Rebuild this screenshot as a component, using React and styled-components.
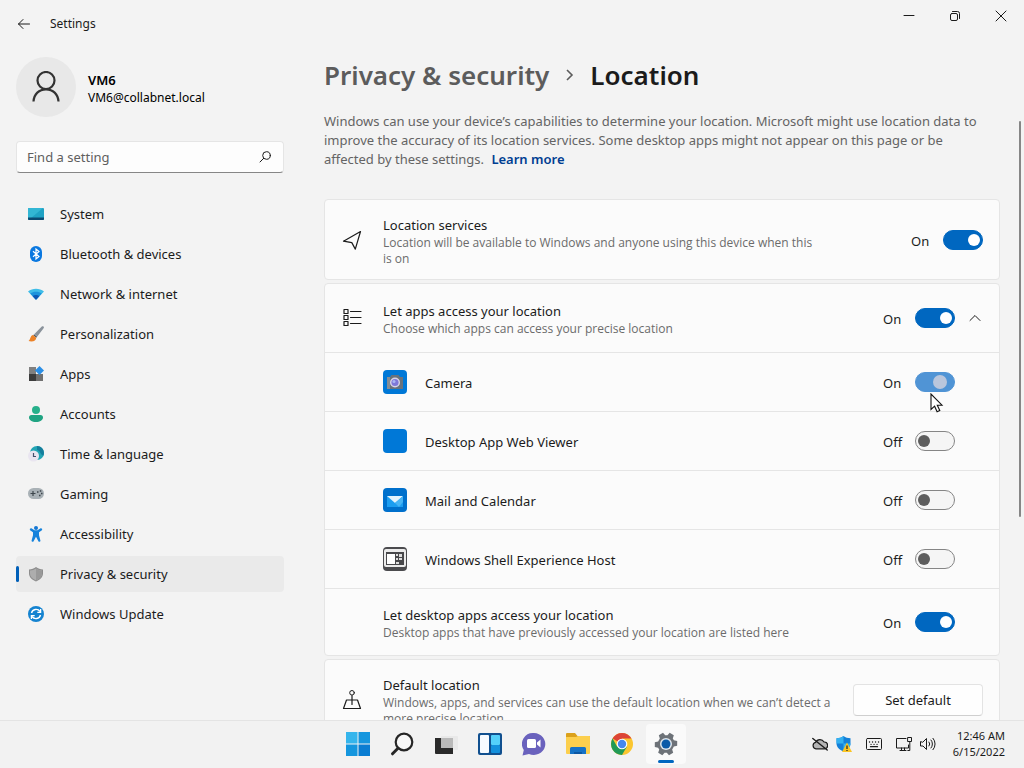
import { useState } from "react";
import styled, { createGlobalStyle } from "styled-components";

const GlobalStyle = createGlobalStyle`
  * {
    box-sizing: border-box;
  }
  body {
    margin: 0;
    background: #f3f3f3;
    color: #1b1b1b;
    font-family: "Noto Sans", "Open Sans", sans-serif;
    font-size: 13px;
    line-height: 20px;
  }
  button,
  input {
    font: inherit;
    color: inherit;
  }
  svg {
    display: block;
    flex: none;
  }
`;

const Desktop = styled.div`
  display: flex;
  flex-direction: column;
  height: 100vh;
  overflow: hidden;
`;

const Window = styled.div`
  flex: 1;
  min-height: 0;
  display: flex;
  flex-direction: column;
`;

const TitleBar = styled.header`
  display: flex;
  align-items: flex-start;
  justify-content: space-between;
  height: 48px;
  flex: none;
`;

const TitleLeft = styled.div`
  display: flex;
  align-items: center;
  gap: 10px;
  height: 48px;
  padding-left: 8px;
  font-size: 12px;
`;

const PlainButton = styled.button`
  display: flex;
  align-items: center;
  justify-content: center;
  width: ${(p) => p.$width || 32}px;
  height: 32px;
  padding: 0;
  border: 0;
  background: transparent;
`;

const WindowControls = styled.div`
  display: flex;
`;

const Body = styled.div`
  flex: 1;
  min-height: 0;
  display: flex;
`;

const Sidebar = styled.aside`
  width: 300px;
  flex: none;
  padding: 9px 16px 0;
`;

const Profile = styled.div`
  display: flex;
  align-items: center;
  gap: 12px;
  height: 60px;
`;

const Avatar = styled.div`
  display: flex;
  align-items: center;
  justify-content: center;
  width: 60px;
  height: 60px;
  border-radius: 50%;
  background: #e8e8e8;
`;

const ProfileName = styled.div`
  margin-top: 4px;
  font-weight: 600;
  line-height: 18px;
  color: #000;
`;

const ProfileMail = styled.div`
  font-size: 12px;
  line-height: 18px;
  color: #000;
`;

const SearchBox = styled.label`
  display: flex;
  align-items: center;
  width: 268px;
  height: 32px;
  margin: 24px 0 23px;
  padding: 0 12px 0 10px;
  border: 1px solid #e5e5e5;
  border-bottom-color: #868686;
  border-radius: 4px;
  background: #fdfdfd;
`;

const SearchInput = styled.input`
  flex: 1;
  min-width: 0;
  padding: 0;
  border: 0;
  outline: 0;
  background: transparent;
  &::placeholder {
    color: #5f5f5f;
    opacity: 1;
  }
`;

const Nav = styled.nav`
  display: flex;
  flex-direction: column;
  gap: 4px;
  width: 268px;
`;

const NavLink = styled.a`
  display: flex;
  align-items: center;
  gap: 16px;
  height: 36px;
  border-radius: 4px;
  color: inherit;
  text-decoration: none;
  background: ${(p) => (p.$active ? "#eaeaea" : "transparent")};
  &::before {
    content: "";
    width: 3px;
    height: 16px;
    margin-right: -7px;
    border-radius: 2px;
    background: ${(p) => (p.$active ? "#005fb8" : "transparent")};
  }
`;

const Content = styled.main`
  flex: 1;
  min-width: 0;
  overflow: hidden;
  padding: 8px 0 0 24px;
`;

const Breadcrumb = styled.h1`
  display: flex;
  align-items: center;
  gap: 16px;
  margin: 0;
  font-size: 26px;
  font-weight: 600;
  line-height: 38px;
`;

const Crumb = styled.a`
  color: #5c5c5c;
  text-decoration: none;
`;

const Intro = styled.p`
  margin: 18px 0 30px;
  padding-right: 8px;
  line-height: 19px;
  color: #646464;
`;

const LearnMore = styled.a`
  margin-left: 4px;
  font-weight: 600;
  color: #003e92;
  text-decoration: none;
`;

const Cards = styled.div`
  display: flex;
  flex-direction: column;
  gap: 3px;
`;

const Card = styled.section`
  border: 1px solid #e5e5e5;
  border-radius: 4px;
  background: #fbfbfb;
`;

const Row = styled.div`
  display: flex;
  align-items: center;
  min-height: ${(p) => p.$height || 79}px;
  padding: 0 ${(p) => (p.$inset ? 44 : 16)}px 0 ${(p) => (p.$nested ? 58 : 17)}px;
  & + & {
    border-top: 1px solid #e5e5e5;
  }
`;

const RowIcon = styled.div`
  width: ${(p) => (p.$app ? 24 : 20)}px;
  margin-right: ${(p) => (p.$app ? 18 : 21)}px;
  flex: none;
`;

const RowText = styled.div`
  flex: 1;
  min-width: 0;
  padding-top: 2px;
`;

const RowTitle = styled.div`
  line-height: 20px;
`;

const RowHint = styled.div`
  font-family: "Open Sans", "Noto Sans", sans-serif;
  font-size: 12px;
  line-height: 16px;
  color: #6b6b6b;
`;

const ToggleLabel = styled.label`
  position: relative;
  display: flex;
  align-items: center;
  justify-content: flex-end;
  min-width: ${(p) => (p.$wide ? 166 : 72)}px;
`;

const ToggleText = styled.span`
  width: 32px;
  padding-top: 2px;
`;

const ToggleInput = styled.input`
  appearance: none;
  display: flex;
  align-items: center;
  width: 40px;
  height: 20px;
  margin: 0;
  padding: 0 2px;
  border: 1px solid #858585;
  border-radius: 10px;
  background: #f5f5f5;
  &::before {
    content: "";
    width: 12px;
    height: 12px;
    border-radius: 50%;
    background: #5d5d5d;
  }
  &:checked {
    justify-content: flex-end;
    padding-right: ${(p) => (p.$pressed ? 7 : 2)}px;
    border-color: ${(p) => (p.$pressed ? "#5094d5" : "#0067c0")};
    background: ${(p) => (p.$pressed ? "#5094d5" : "#0067c0")};
  }
  &:checked::before {
    width: ${(p) => (p.$pressed ? 14 : 12)}px;
    height: ${(p) => (p.$pressed ? 14 : 12)}px;
    background: ${(p) => (p.$pressed ? "#b9c6dc" : "#fff")};
  }
`;

const Expander = styled(PlainButton)`
  margin: 0 -34px 0 6px;
`;

const Pointer = styled.svg`
  position: absolute;
  left: 47px;
  top: 22px;
`;

const DefaultButton = styled.button`
  width: 130px;
  height: 32px;
  margin-left: 16px;
  border: 1px solid #e3e3e3;
  border-bottom-color: #cfcfcf;
  border-radius: 4px;
  background: #fefefe;
`;

const ScrollTrack = styled.div`
  width: 24px;
  flex: none;
  display: flex;
  justify-content: flex-end;
  padding: 73px 3px 0 0;
`;

const ScrollThumb = styled.div`
  width: 2px;
  height: 396px;
  border-radius: 1px;
  background: #868686;
`;

const Taskbar = styled.footer`
  display: grid;
  grid-template-columns: 1fr auto 1fr;
  align-items: center;
  flex: none;
  height: 48px;
  padding-bottom: 1px;
  border-top: 1px solid #e4e4e4;
  background: #f2f2f2;
`;

const TaskList = styled.div`
  grid-column: 2;
  display: flex;
  gap: 4px;
`;

const TaskButton = styled.button`
  position: relative;
  display: flex;
  align-items: center;
  justify-content: center;
  width: 40px;
  height: 40px;
  padding: 0;
  border: 0;
  border-radius: 4px;
  background: ${(p) => (p.$active ? "#fafafa" : "transparent")};
  &::after {
    content: "";
    position: absolute;
    bottom: 1px;
    width: 16px;
    height: 3px;
    border-radius: 2px;
    background: ${(p) => (p.$active ? "#0067c0" : "transparent")};
  }
`;

const Tray = styled.div`
  display: flex;
  align-items: center;
  justify-content: flex-end;
  gap: 14px;
  padding-right: 19px;
`;

const TrayGroup = styled.div`
  display: flex;
  gap: 8px;
`;

const Clock = styled.div`
  min-width: 55px;
  font-size: 11px;
  line-height: 16px;
  text-align: right;
`;

const navItems = [
  {
    name: "System",
    icon: (
      <>
        <rect x="0" y="2" width="16" height="12" rx="1" fill="#1fa2c4" />
        <path d="M0 3a1 1 0 0 1 1-1h14L3 12H0z" fill="#32b6d4" />
        <path d="M0 11.500h16V13a1 1 0 0 1-1 1H1a1 1 0 0 1-1-1z" fill="#0b4a72" />
      </>
    ),
  },
  {
    name: "Bluetooth & devices",
    icon: (
      <>
        <rect x="2" y="0" width="12" height="16" rx="6" fill="#0a78e0" />
        <path d="M5 5.300l6 5.200L8 13V3l3 2.500-6 5.200" fill="none" stroke="#fff" strokeWidth="1.200" />
      </>
    ),
  },
  {
    name: "Network & internet",
    icon: (
      <>
        <path d="M0 5.500C4.500 1.800 11.500 1.800 16 5.500L8.600 13.200a.8.8 0 0 1-1.200 0z" fill="#3fbde8" />
        <path d="M2.200 7.600c3.500-2.600 8.100-2.600 11.600 0L8.600 13.200a.8.8 0 0 1-1.200 0z" fill="#1b93dc" />
        <path d="M4.600 10.100c2-1.500 4.800-1.500 6.800 0l-2.800 3.100a.8.8 0 0 1-1.200 0z" fill="#0c57b4" />
      </>
    ),
  },
  {
    name: "Personalization",
    icon: (
      <>
        <path d="M15.500.4c.7.6.5 1.300.1 1.900L9.300 10.600 6.400 8 13.800.6c.5-.5 1.200-.6 1.700-.2z" fill="#8a929b" />
        <path d="M6.200 8.200l2.900 2.500-.9 1.100-3-2.600z" fill="#4d5661" />
        <path d="M5.100 9.100l3.100 2.700c.1 2.500-2.900 4.600-7.700 3.300 1.900-.8 1.500-5.500 4.600-6z" fill="#ec8227" />
      </>
    ),
  },
  {
    name: "Apps",
    icon: (
      <>
        <rect x="1" y="1" width="7" height="7" fill="#808080" />
        <rect x="1" y="8" width="7" height="7" fill="#3c3c3c" />
        <rect x="8" y="8" width="7" height="7" fill="#707070" />
        <path d="M11.500 0L16 4.500 11.500 9 7 4.500z" fill="#2b8fe6" />
      </>
    ),
  },
  {
    name: "Accounts",
    icon: (
      <>
        <circle cx="8" cy="4" r="4" fill="#27b08b" />
        <path d="M3.500 9h9A2.500 2.500 0 0 1 15 11.500C15 14 12 16 8 16s-7-2-7-4.500A2.500 2.500 0 0 1 3.500 9z" fill="#1fa382" />
      </>
    ),
  },
  {
    name: "Time & language",
    icon: (
      <>
        <circle cx="9" cy="7" r="7" fill="#22a5b4" />
        <path d="M9 0a7 7 0 0 1 6.500 9.500C12 9 13 5 9 4z" fill="#147e9c" />
        <circle cx="5.500" cy="10" r="5.500" fill="#e9e5f0" />
        <path d="M5.500 7v3.500H8" fill="none" stroke="#44506b" strokeWidth="1.200" />
      </>
    ),
  },
  {
    name: "Gaming",
    icon: (
      <>
        <rect x="0" y="2" width="16" height="11" rx="5.500" fill="#a9b1b6" />
        <path d="M5 5v5M2.500 7.500h5" stroke="#3e464c" strokeWidth="1.200" />
        <path d="M9 6h1.500M11 9.500h1.500M11.800 5h1.500M13 7.500h1.500" stroke="#3e464c" strokeWidth="1.500" />
      </>
    ),
  },
  {
    name: "Accessibility",
    icon: (
      <>
        <circle cx="8" cy="2" r="2" fill="#1477d4" />
        <path
          d="M2 2.800c.5-.8 1.200-.7 1.800-.3L6.500 4.300h3l2.700-1.800c.6-.4 1.300-.5 1.800.3.400.7.100 1.200-.4 1.600L11 6.300v3l1.400 5.200c.3 1.200-1.500 1.900-2 .7L8 10.800l-2.400 4.400c-.5 1.200-2.300.5-2-.7L5 9.300v-3L2.400 4.400c-.5-.4-.8-.9-.4-1.600z"
          fill="#1683dc"
        />
      </>
    ),
  },
  {
    name: "Privacy & security",
    icon: (
      <>
        <path d="M8 1c2 1.600 4.200 2.300 7 2.400v4.100c0 3.800-3 6.300-7 8-4-1.700-7-4.200-7-8V3.400C3.800 3.300 6 2.600 8 1z" fill="#8c8c8c" />
        <path d="M8 2.400c1.700 1.200 3.600 1.900 6 2v3.100c0 3.100-2.400 5.300-6 6.900-3.600-1.600-6-3.800-6-6.900V4.400c2.400-.1 4.300-.8 6-2z" fill="#adadad" />
        <path d="M8 2.400c1.700 1.200 3.600 1.900 6 2v3.100c0 3.100-2.400 5.300-6 6.900z" fill="#999" />
      </>
    ),
  },
  {
    name: "Windows Update",
    icon: (
      <>
        <circle cx="8" cy="8" r="8" fill="#1583d0" />
        <path d="M3.500 7A4.700 4.700 0 0 1 12 5.500M12.500 9A4.700 4.700 0 0 1 4 10.500" fill="none" stroke="#fff" strokeWidth="1.400" />
        <path d="M12.600 3v3.300H9.300M3.400 13V9.700h3.300" fill="none" stroke="#fff" strokeWidth="1.300" />
      </>
    ),
  },
];

const apps = [
  {
    name: "Camera",
    on: true,
    pressed: true,
    icon: (
      <>
        <rect width="24" height="24" rx="4" fill="#0078d7" />
        <path d="M4 7h3l1.500-2h7L17 7h3v12H4z" fill="#69727c" />
        <path d="M4 7h3v12H4z" fill="#858d95" />
        <circle cx="12" cy="12.500" r="5" fill="#d9d5e6" />
        <circle cx="12" cy="12.500" r="3.600" fill="#7f78d8" />
        <circle cx="11" cy="11.500" r="1.500" fill="#a9b6f4" />
      </>
    ),
  },
  {
    name: "Desktop App Web Viewer",
    icon: <rect width="24" height="24" rx="4" fill="#0078d7" />,
  },
  {
    name: "Mail and Calendar",
    icon: (
      <>
        <rect width="24" height="24" rx="4" fill="#0070cc" />
        <path d="M4 8h16v11H4z" fill="#1c9df0" />
        <path d="M4 8h16l-8 7z" fill="#e4f3fd" />
        <path d="M12 15l8-7v6l-4 5z" fill="#46b4f5" />
      </>
    ),
  },
  {
    name: "Windows Shell Experience Host",
    icon: (
      <>
        <rect width="24" height="24" rx="4" fill="#4b4b4e" />
        <rect x="1" y="2" width="22" height="18" rx="2" fill="#ececec" />
        <path d="M3 5h18v13H3z" fill="#48484b" />
        <path d="M4 7h8v10H4z" fill="#fff" />
        <path d="M13 7h2v2h-2zM13 11h2v2h-2zM16 7h3v3h-3zM16 11h3v2h-3zM13 15h3v2h-3z" fill="#dedede" />
      </>
    ),
  },
];

const taskIcons = [
  {
    name: "Start",
    icon: (
      <>
        <path d="M0 0h11.500v11.500H0z" fill="#35b5ec" />
        <path d="M12.500 0H24v11.500H12.500zM0 12.500h11.500V24H0z" fill="#1596de" />
        <path d="M12.500 12.500H24V24H12.500z" fill="#0a7dd2" />
      </>
    ),
  },
  {
    name: "Search",
    icon: (
      <>
        <circle cx="14" cy="10" r="8.300" fill="#f8f8f8" stroke="#262626" strokeWidth="2.200" />
        <path d="M8 16.300L2.500 21.800" stroke="#262626" strokeWidth="3" strokeLinecap="round" />
      </>
    ),
  },
  {
    name: "Task View",
    icon: (
      <>
        <rect x="7" y="4" width="17" height="14" rx="1" fill="#e9e9e9" />
        <path d="M1 6h18v16H2a1 1 0 0 1-1-1z" fill="#2a2a2a" />
        <path d="M7 6h12v10H7z" fill="#b9b9b9" />
      </>
    ),
  },
  {
    name: "Widgets",
    icon: (
      <>
        <rect x="0" y="1" width="24" height="22" rx="2" fill="#11508f" />
        <rect x="2" y="3" width="9" height="18" rx="1" fill="#f7fbff" />
        <rect x="13" y="3" width="9" height="10" rx="1" fill="#54d0fa" />
        <rect x="13" y="13" width="9" height="8" rx="1" fill="#1390dc" />
      </>
    ),
  },
  {
    name: "Chat",
    icon: (
      <>
        <path d="M12 1a11.500 11 0 1 1-5 21L.5 23.500 1.800 18A11 11 0 0 1 12 1z" fill="#6a62bd" />
        <rect x="5" y="7" width="9" height="9" rx="1.500" fill="#fff" />
        <path d="M15 10.500L18.500 7.500v8L15 12.500z" fill="#fff" />
      </>
    ),
  },
  {
    name: "File Explorer",
    icon: (
      <>
        <path d="M0 2a1 1 0 0 1 1-1h8l2.500 3H23a1 1 0 0 1 1 1v5H0z" fill="#dba11c" />
        <path d="M0 5h10l2-1h11a1 1 0 0 1 1 1v16a1 1 0 0 1-1 1H1a1 1 0 0 1-1-1z" fill="#fccf4d" />
        <path d="M4 22v-5.500A1.500 1.500 0 0 1 5.500 15h13a1.500 1.500 0 0 1 1.500 1.500V22z" fill="#1672c6" />
        <path d="M8 22v-2h8v2z" fill="#0d58a4" />
      </>
    ),
  },
  {
    name: "Google Chrome",
    icon: (
      <>
        <circle cx="12" cy="12" r="11" fill="#fbc62f" />
        <path d="M12 12L2.500 6.500A11 11 0 0 1 21.500 6.500H12z" fill="#dc4437" />
        <path d="M2.500 6.500A11 11 0 0 0 12 23l4.800-8.300L12 12 7.200 14.700z" fill="#219a56" />
        <circle cx="12" cy="12" r="5.300" fill="#fff" />
        <circle cx="12" cy="12" r="4.200" fill="#4687ee" />
      </>
    ),
  },
  {
    name: "Settings",
    active: true,
    icon: (
      <>
        <path
          d="M9.600.5h4.800l.7 3.300 1.900 1.100 3.200-1.100 2.400 4.200-2.500 2.300v3.400l2.500 2.300-2.400 4.200-3.200-1.100-1.900 1.100-.7 3.300H9.600l-.7-3.300L7 19.100l-3.200 1.100L1.400 16l2.500-2.300v-3.400L1.400 8l2.400-4.200L7 4.900l1.900-1.100z"
          fill="#6d7278"
          transform="rotate(30 12 12)"
        />
        <circle cx="12" cy="12" r="6" fill="#dfe7ee" />
        <circle cx="12" cy="12" r="4.500" fill="#0c5ba8" />
      </>
    ),
  },
];

const Icon = ({ size = 16, children }) => (
  <svg
    width={size}
    height={size}
    viewBox={`0 0 ${size} ${size}`}
    fill="none"
    stroke="#1b1b1b"
    strokeLinejoin="round"
    strokeLinecap="round"
    aria-hidden="true"
  >
    {children}
  </svg>
);

const Glyph = ({ size = 16, children }) => (
  <svg width={size} height={size} viewBox={`0 0 ${size} ${size}`} aria-hidden="true">
    {children}
  </svg>
);

const Toggle = ({ name, initial = false, pressed, wide }) => {
  const [on, setOn] = useState(initial);

  return (
    <ToggleLabel $wide={wide}>
      <ToggleText>{on ? "On" : "Off"}</ToggleText>
      <ToggleInput
        type="checkbox"
        role="switch"
        aria-label={name}
        checked={on}
        $pressed={pressed}
        onChange={(e) => setOn(e.target.checked)}
      />
      {pressed && (
        <Pointer width="14" height="20" viewBox="0 0 14 20" aria-hidden="true">
          <path
            d="M1 1v15.500l3.600-3.300 2.500 5.500 2.700-1.200-2.500-5.300H12z"
            fill="#fff"
            stroke="#111"
            strokeWidth="1.100"
          />
        </Pointer>
      )}
    </ToggleLabel>
  );
};

function App() {
  const [query, setQuery] = useState("");

  return (
    <Desktop>
      <GlobalStyle />
      <Window>
        <TitleBar>
          <TitleLeft>
            <PlainButton aria-label="Back">
              <Icon>
                <path d="M2.500 8h11M7 3.500L2.500 8 7 12.500" />
              </Icon>
            </PlainButton>
            Settings
          </TitleLeft>
          <WindowControls>
            <PlainButton $width={46} aria-label="Minimize">
              <Icon size={12}>
                <path d="M1 5.500h10" />
              </Icon>
            </PlainButton>
            <PlainButton $width={46} aria-label="Restore">
              <Icon size={12}>
                <rect x="1.500" y="3.500" width="7" height="7" rx="1.500" />
                <path d="M3.500 1.500h5a2 2 0 0 1 2 2v5" />
              </Icon>
            </PlainButton>
            <PlainButton $width={46} aria-label="Close">
              <Icon size={12}>
                <path d="M1 1l10 10M11 1L1 11" />
              </Icon>
            </PlainButton>
          </WindowControls>
        </TitleBar>

        <Body>
          <Sidebar>
            <Profile>
              <Avatar>
                <svg width="30" height="32" viewBox="0 0 30 32" fill="none" stroke="#333" strokeWidth="2.200">
                  <circle cx="15" cy="9.500" r="8.500" />
                  <path d="M2.500 30.500C3 23 8 18.300 15 18.300S27 23 27.500 30.500" />
                </svg>
              </Avatar>
              <div>
                <ProfileName>VM6</ProfileName>
                <ProfileMail>VM6@collabnet.local</ProfileMail>
              </div>
            </Profile>
            <SearchBox>
              <SearchInput
                type="text"
                aria-label="Find a setting"
                placeholder="Find a setting"
                value={query}
                onChange={(e) => setQuery(e.target.value)}
              />
              <Icon size={12}>
                <circle cx="7.500" cy="4.500" r="3.800" />
                <path d="M4.700 7.300L1 11" />
              </Icon>
            </SearchBox>
            <Nav>
              {navItems.map((item) => (
                <NavLink key={item.name} href="#" $active={item.name === "Privacy & security"}>
                  <Glyph>{item.icon}</Glyph>
                  {item.name}
                </NavLink>
              ))}
            </Nav>
          </Sidebar>

          <Content>
            <Breadcrumb>
              <Crumb href="#">Privacy & security</Crumb>
              <svg width="9" height="12" viewBox="0 0 9 12" fill="none" stroke="#5c5c5c" strokeWidth="1.600">
                <path d="M2 1l5 5-5 5" />
              </svg>
              Location
            </Breadcrumb>
            <Intro>
              Windows can use your device’s capabilities to determine your location. Microsoft might use
              location data to improve the accuracy of its location services. Some desktop apps might not
              appear on this page or be affected by these settings. <LearnMore href="#">Learn more</LearnMore>
            </Intro>

            <Cards>
              <Card>
                <Row>
                  <RowIcon>
                    <Icon size={20}>
                      <path d="M18.500 1.500L1.500 11.200l8.300 1.400 3.500 6.500z" strokeWidth="1.200" />
                    </Icon>
                  </RowIcon>
                  <RowText>
                    <RowTitle>Location services</RowTitle>
                    <RowHint>
                      Location will be available to Windows and anyone using this device when this is on
                    </RowHint>
                  </RowText>
                  <Toggle name="Location services" initial wide />
                </Row>
              </Card>

              <Card>
                <Row $height={68} $inset>
                  <RowIcon>
                    <Icon size={20}>
                      <path
                        d="M2 1.500h4v4H2zM2 7.500h4v4H2zM2 13.500h4v4H2zM8.500 3.500h10.500M8.500 9.500h10.500M8.500 15.500h10.500"
                        strokeWidth="1.200"
                      />
                    </Icon>
                  </RowIcon>
                  <RowText>
                    <RowTitle>Let apps access your location</RowTitle>
                    <RowHint>Choose which apps can access your precise location</RowHint>
                  </RowText>
                  <Toggle name="Let apps access your location" initial />
                  <Expander $width={28} aria-label="Collapse">
                    <Icon size={12}>
                      <path d="M1 8.500l5-5 5 5" />
                    </Icon>
                  </Expander>
                </Row>
                {apps.map((app) => (
                  <Row key={app.name} $height={59} $inset $nested>
                    <RowIcon $app>
                      <Glyph size={24}>{app.icon}</Glyph>
                    </RowIcon>
                    <RowText>
                      <RowTitle>{app.name}</RowTitle>
                    </RowText>
                    <Toggle name={app.name} initial={app.on} pressed={app.pressed} />
                  </Row>
                ))}
                <Row $height={67} $inset $nested>
                  <RowText>
                    <RowTitle>Let desktop apps access your location</RowTitle>
                    <RowHint>Desktop apps that have previously accessed your location are listed here</RowHint>
                  </RowText>
                  <Toggle name="Let desktop apps access your location" initial />
                </Row>
              </Card>

              <Card>
                <Row>
                  <RowIcon>
                    <Icon size={20}>
                      <circle cx="10" cy="2.800" r="2.300" />
                      <path d="M10 5.500v9M4.500 10h11l3 8.500h-17z" strokeWidth="1.200" />
                    </Icon>
                  </RowIcon>
                  <RowText>
                    <RowTitle>Default location</RowTitle>
                    <RowHint>
                      Windows, apps, and services can use the default location when we can’t detect a more precise
                      location
                    </RowHint>
                  </RowText>
                  <DefaultButton>Set default</DefaultButton>
                </Row>
              </Card>
            </Cards>
          </Content>
          <ScrollTrack>
            <ScrollThumb />
          </ScrollTrack>
        </Body>
      </Window>

      <Taskbar>
        <TaskList>
          {taskIcons.map((task) => (
            <TaskButton key={task.name} aria-label={task.name} $active={task.active}>
              <Glyph size={24}>{task.icon}</Glyph>
            </TaskButton>
          ))}
        </TaskList>
        <Tray>
          <TrayGroup>
            <Icon>
              <path
                d="M4 12.800a3.300 3.300 0 0 1-.3-6.500A4.600 4.600 0 0 1 12 6a3.400 3.400 0 0 1 .5 6.800z"
                fill="#b5b5b5"
                strokeWidth="1.200"
              />
              <path d="M.8 2.500l14.400 11.500" strokeWidth="1.400" />
            </Icon>
            <Glyph>
              <path d="M7.500 0c2 1.500 4.300 2.200 7 2.300v5c0 4-3 6.500-7 8.200-4-1.700-7-4.200-7-8.200v-5C3.200 2.200 5.500 1.500 7.500 0z" fill="#1480d8" />
              <path d="M7.500 0v7.500H.500V2.300C3.200 2.200 5.500 1.500 7.500 0zM7.500 7.500h7c0 4-3 6.300-7 8z" fill="#35b1f0" />
              <path d="M11 6.500l5 9.500H6z" fill="#fbc524" />
              <path d="M11 9.500v3.500M11 14v1" stroke="#222" strokeWidth="1.200" />
            </Glyph>
          </TrayGroup>
          <Icon>
            <rect x=".5" y="2.500" width="15" height="11" rx="1" />
            <path d="M3.500 6h.1M6.500 6h.1M9.500 6h.1M12.500 6h.1M5 8.300h.1M8 8.300h.1M11 8.300h.1M4.500 10.700h7" strokeWidth="1.300" />
          </Icon>
          <TrayGroup>
            <Icon>
              <path d="M10 2.500H.500v9.500h12V9M4 14.500h6M5.500 12v2.500M8.500 12v2.500" />
              <path d="M12 1.500h3.500v4H12zM13.800 5.500v9h-2" />
            </Icon>
            <Icon>
              <path d="M.500 6v4H3l3.500 3.500v-11L3 6zM9 6a3 3 0 0 1 0 4M11 4a6 6 0 0 1 0 8M13 2.300a8.500 8.500 0 0 1 0 11.400" />
            </Icon>
          </TrayGroup>
          <Clock>
            <div>12:46 AM</div>
            <div>6/15/2022</div>
          </Clock>
        </Tray>
      </Taskbar>
    </Desktop>
  );
}

export default App;
